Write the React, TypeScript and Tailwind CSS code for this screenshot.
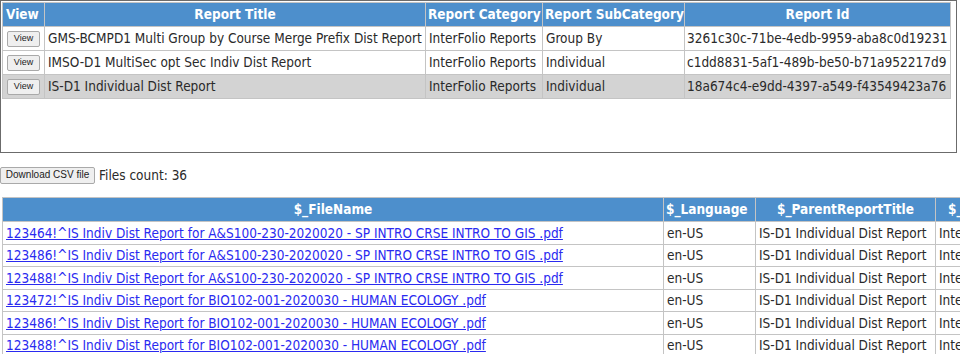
import React from "react";

const reports = [
  ["GMS-BCMPD1 Multi Group by Course Merge Prefix Dist Report", "InterFolio Reports", "Group By", "3261c30c-71be-4edb-9959-aba8c0d19231"],
  ["IMSO-D1 MultiSec opt Sec Indiv Dist Report", "InterFolio Reports", "Individual", "c1dd8831-5af1-489b-be50-b71a952217d9"],
  ["IS-D1 Individual Dist Report", "InterFolio Reports", "Individual", "18a674c4-e9dd-4397-a549-f43549423a76"],
];

const files = [
  "123464!^IS Indiv Dist Report for A&S100-230-2020020 - SP INTRO CRSE INTRO TO GIS .pdf",
  "123486!^IS Indiv Dist Report for A&S100-230-2020020 - SP INTRO CRSE INTRO TO GIS .pdf",
  "123488!^IS Indiv Dist Report for A&S100-230-2020020 - SP INTRO CRSE INTRO TO GIS .pdf",
  "123472!^IS Indiv Dist Report for BIO102-001-2020030 - HUMAN ECOLOGY .pdf",
  "123486!^IS Indiv Dist Report for BIO102-001-2020030 - HUMAN ECOLOGY .pdf",
  "123488!^IS Indiv Dist Report for BIO102-001-2020030 - HUMAN ECOLOGY .pdf",
];

const font = { fontFamily: '"DejaVu Sans Condensed", "DejaVu Sans", sans-serif' };

export default function App() {
  return (
    <div className="w-[960px] h-[354px] overflow-hidden bg-white text-[13.5px] text-[#2a2a2a]" style={font}>
      <div className="w-[957px] h-[153px] border border-[#6b6b6b] p-[1px]">
        <table className="border-collapse w-[949px] table-fixed">
          <colgroup>
            <col className="w-[42px]" />
            <col className="w-[381px]" />
            <col className="w-[117px]" />
            <col className="w-[142px]" />
            <col />
          </colgroup>
          <thead>
            <tr className="bg-[#4d8fcc] text-white font-bold h-[24px]">
              <th className="border border-[#c4c4c4] px-[3px] text-left">View</th>
              <th className="border border-[#c4c4c4] text-center">Report Title</th>
              <th className="border border-[#c4c4c4] px-[2px] text-left whitespace-nowrap">Report Category</th>
              <th className="border border-[#c4c4c4] px-[2px] text-left whitespace-nowrap">Report SubCategory</th>
              <th className="border border-[#c4c4c4] text-center">Report Id</th>
            </tr>
          </thead>
          <tbody>
            {reports.map((r, i) => (
              <tr key={i} className={`h-[24px] ${i === 2 ? "bg-[#d3d3d3]" : "bg-white"}`}>
                <td className="border border-[#c4c4c4] px-[4px]">
                  <button className="h-[16px] w-[33px] text-[9px] leading-none border border-[#a9a9a9] rounded-[2px] bg-[#efefef] text-[#222] flex items-center justify-center" style={{ fontFamily: '"Liberation Sans", sans-serif' }}>
                    View
                  </button>
                </td>
                <td className="border border-[#c4c4c4] px-[3px] whitespace-nowrap overflow-hidden">{r[0]}</td>
                <td className="border border-[#c4c4c4] px-[3px] whitespace-nowrap overflow-hidden">{r[1]}</td>
                <td className="border border-[#c4c4c4] px-[3px] whitespace-nowrap overflow-hidden">{r[2]}</td>
                <td className="border border-[#c4c4c4] pl-[2px] whitespace-nowrap overflow-hidden">{r[3]}</td>
              </tr>
            ))}
          </tbody>
        </table>
      </div>

      <div className="flex items-center mt-[13px] h-[18px] gap-[4px]">
        <button className="h-[17px] w-[95px] text-[10px] leading-none border border-[#a9a9a9] rounded-[2px] bg-[#efefef] text-[#222]" style={{ fontFamily: '"Liberation Sans", sans-serif' }}>
          Download CSV file
        </button>
        <span>Files count: 36</span>
      </div>

      <div className="mt-[13px] pl-[2px] w-[960px] overflow-hidden">
        <table className="border-collapse w-[1120px] table-fixed">
          <colgroup>
            <col className="w-[661px]" />
            <col className="w-[92px]" />
            <col className="w-[180px]" />
            <col className="w-[187px]" />
          </colgroup>
          <thead>
            <tr className="bg-[#4d8fcc] text-white font-bold h-[24px]">
              <th className="border border-[#c4c4c4] text-center">$_FileName</th>
              <th className="border border-[#c4c4c4] px-[2px] text-left">$_Language</th>
              <th className="border border-[#c4c4c4] text-center whitespace-nowrap">$_ParentReportTitle</th>
              <th className="border border-[#c4c4c4] pl-[12px] text-left whitespace-nowrap">$_ReportCategory</th>
            </tr>
          </thead>
          <tbody>
            {files.map((f, i) => (
              <tr key={i} className="h-[22.5px]">
                <td className="border border-[#c4c4c4] px-[3px] whitespace-nowrap">
                  <a href="#" className="text-[#2a2af0] underline">{f}</a>
                </td>
                <td className="border border-[#c4c4c4] px-[3px]">en-US</td>
                <td className="border border-[#c4c4c4] px-[3px] whitespace-nowrap">IS-D1 Individual Dist Report</td>
                <td className="border border-[#c4c4c4] px-[3px] whitespace-nowrap">InterFolio Reports</td>
              </tr>
            ))}
          </tbody>
        </table>
      </div>
    </div>
  );
}
